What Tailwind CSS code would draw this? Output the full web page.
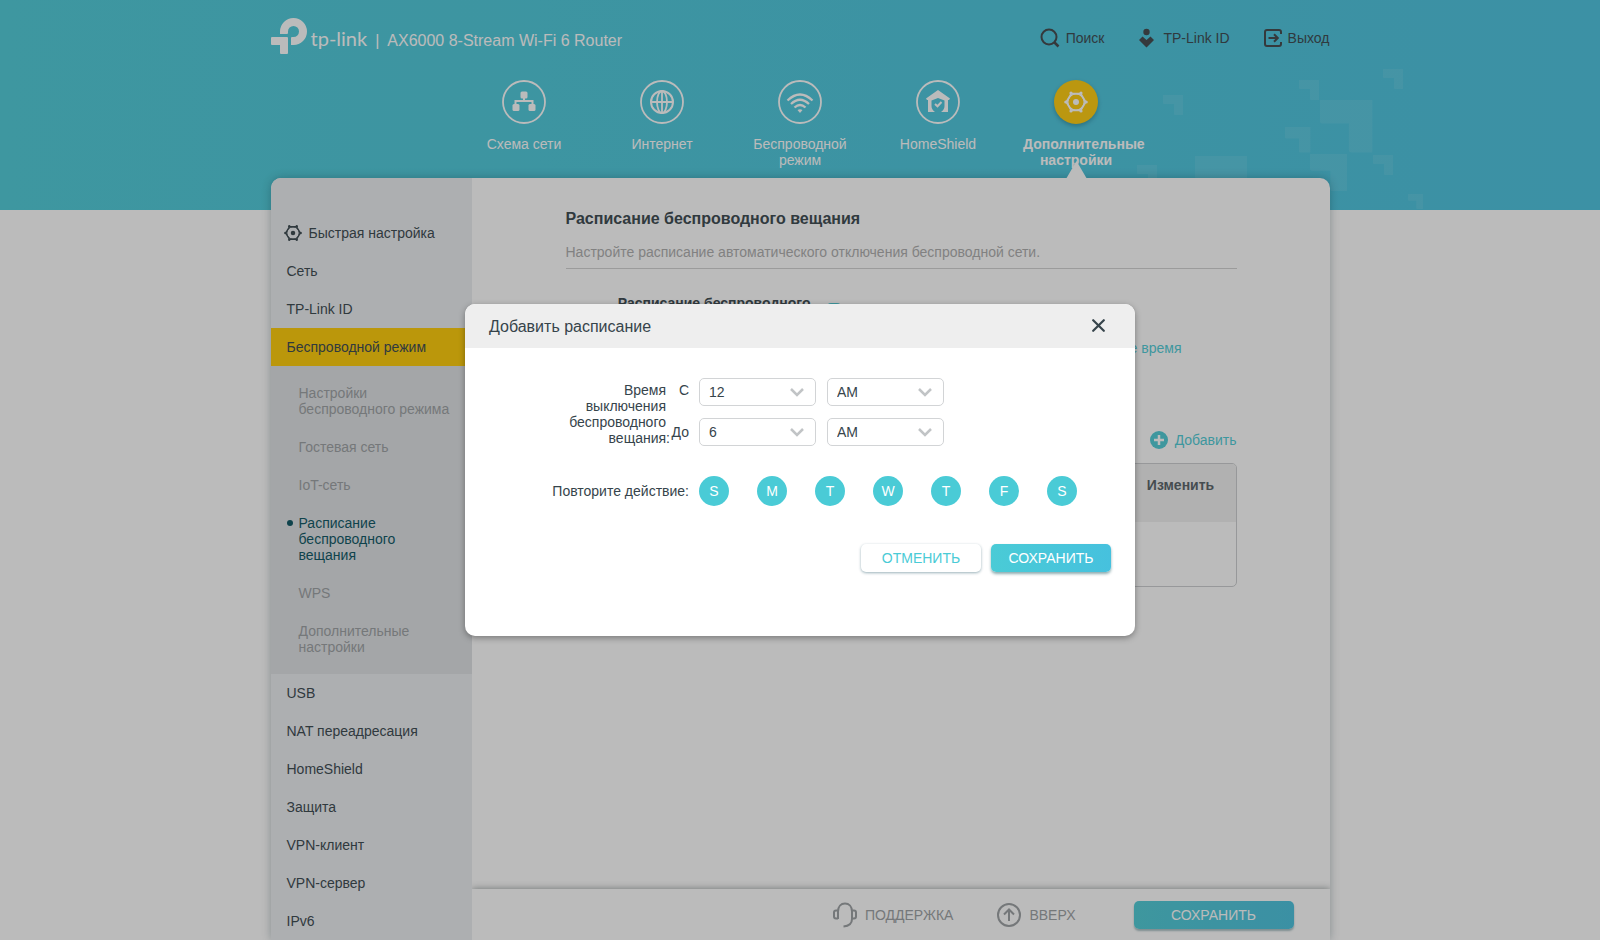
<!DOCTYPE html>
<html lang="ru">
<head>
  <meta charset="UTF-8" />
  <meta name="viewport" content="width=device-width, initial-scale=1" />
  <title>AX6000 8-Stream Wi-Fi 6 Router</title>
  <script src="https://cdn.jsdelivr.net/npm/@tailwindcss/browser@4"></script>
</head>
<body class="bg-white font-['Liberation_Sans',Arial,sans-serif] text-sm leading-4 text-[#36444b]">
  <div class="relative min-h-screen flex flex-col overflow-hidden">

    <!-- Header background -->
    <div class="absolute inset-x-0 top-0 h-[210px] overflow-hidden bg-linear-to-r from-[#4acbd8] to-[#47c2df]">
      <svg class="absolute left-1/2 top-0 ml-[337px]" width="290" height="210" viewBox="1137 0 290 210" fill="#fff" fill-opacity=".08" aria-hidden="true">
        <defs><path id="corner" d="M0 0H20V20H12Q11 20 11 19V9H1Q0 9 0 8Z" /></defs>
        <use href="#corner" transform="translate(1163 95)" />
        <use href="#corner" transform="translate(1299 80)" />
        <use href="#corner" transform="translate(1383 69)" />
        <use href="#corner" transform="translate(1373 155)" />
        <use href="#corner" transform="translate(1137 165)" />
        <use href="#corner" transform="translate(1408 194) scale(.75)" />
        <use href="#corner" transform="translate(1285 127) scale(1.27)" />
        <use href="#corner" transform="translate(1310 154) scale(1.85)" />
        <use href="#corner" transform="translate(1320 100) scale(2.62)" />
        <use href="#corner" transform="translate(1195 156) scale(2.6)" />
      </svg>
    </div>

    <div class="relative w-full max-w-[1059px] mx-auto flex-1 flex flex-col">
      <!-- Top bar -->
      <header class="h-20 flex justify-between">
        <div class="flex items-start pt-[18px] text-white">
          <svg width="36" height="36" viewBox="0 0 36 36" fill="currentColor" aria-hidden="true">
            <path d="M9 16V13.5A13.5 13.5 0 1 1 22.5 27H20V20Q20 19 21 19H22.5A5.5 5.5 0 1 0 17 13.5V15Q17 16 16 16Z" />
            <path d="M1 19H16Q17 19 17 20V35Q17 36 16 36H10Q9 36 9 35V27H1Q0 27 0 26V20Q0 19 1 19Z" />
          </svg>
          <span class="ml-1 pt-2 font-['Lato',sans-serif] text-xl leading-6">tp-link</span>
          <span class="pt-[13px] pl-2 text-base leading-5">|</span>
          <span class="pt-[13px] pl-2 text-base leading-5">AX6000 8-Stream Wi-Fi 6 Router</span>
        </div>
        <nav class="flex items-start gap-[34px] pt-7">
          <a href="#" class="flex items-center gap-1.5 h-5">
            <svg width="20" height="20" viewBox="0 0 20 20" fill="none" stroke="#3e4347" stroke-width="2" aria-hidden="true"><circle cx="9" cy="9" r="7.5" /><path d="M14.5 14.5L18.5 18.5" stroke-width="2.5" /></svg>
            Поиск
          </a>
          <a href="#" class="flex items-center gap-2 h-5">
            <svg width="17" height="20" viewBox="0 0 17 20" fill="#3e4347" aria-hidden="true"><circle cx="8.500" cy="4" r="3.2" /><path d="M1 12L4.500 8.500L8.500 12L12.500 8.500L16 12L8.500 19.500Z" /></svg>
            TP-Link ID
          </a>
          <a href="#" class="flex items-center gap-1.5 h-5">
            <svg width="18" height="20" viewBox="0 0 18 20" fill="none" stroke="#3e4347" stroke-width="2" aria-hidden="true"><path d="M17 6V4Q17 2 15 2H3Q1 2 1 4V16Q1 18 3 18H15Q17 18 17 16V14M4.500 10H13.500M10 6.200L13.800 10L10 13.800" /></svg>
            Выход
          </a>
        </nav>
      </header>

      <!-- Main tabs -->
      <nav class="h-[98px] flex justify-center text-white text-center">
        <a href="#" class="w-[138px] flex flex-col items-center gap-3">
          <svg width="44" height="44" viewBox="0 0 44 44" fill="none" stroke="currentColor" stroke-width="1.800" aria-hidden="true"><circle cx="22" cy="22" r="21" /><g fill="currentColor" stroke="none"><rect x="18.500" y="11.500" width="7" height="7" rx="1.500" /><rect x="10.500" y="24" width="7" height="7" rx="1.500" /><rect x="26.500" y="24" width="7" height="7" rx="1.500" /></g><path d="M22 18V21M13.500 25V21H30.500V25" stroke-width="2" /></svg>
          Схема сети
        </a>
        <a href="#" class="w-[138px] flex flex-col items-center gap-3">
          <svg width="44" height="44" viewBox="0 0 44 44" fill="none" stroke="currentColor" stroke-width="1.800" aria-hidden="true"><circle cx="22" cy="22" r="21" /><circle cx="22" cy="22" r="11" stroke-width="2" /><ellipse cx="22" cy="22" rx="5" ry="11" /><path d="M11 22H33M22 11V33" /></svg>
          Интернет
        </a>
        <a href="#" class="w-[138px] flex flex-col items-center gap-3">
          <svg width="44" height="44" viewBox="0 0 44 44" fill="none" stroke="currentColor" stroke-width="1.800" aria-hidden="true"><circle cx="22" cy="22" r="21" /><path d="M9.500 20.500Q22 8.500 34.500 20.500M13 24Q22 15.500 31 24M16.500 27.500Q22 22.500 27.500 27.500" stroke-width="2.300" /><path d="M19.500 30Q22 28.500 24.500 30L22 33Z" fill="currentColor" stroke="none" /></svg>
          <span class="px-5">Беспроводной режим</span>
        </a>
        <a href="#" class="w-[138px] flex flex-col items-center gap-3">
          <svg width="44" height="44" viewBox="0 0 44 44" fill="none" stroke="currentColor" stroke-width="1.800" aria-hidden="true"><circle cx="22" cy="22" r="21" /><path d="M22 10L34 18.500L33 20H32V32H25Q28.500 29.500 28.500 26V20.500L22 18L15.500 20.500V26Q15.500 29.500 19 32H12V20H11L10 18.500Z" fill="currentColor" stroke="none" /><path d="M19 24L21.500 26.300L25.500 22" stroke-width="2" /></svg>
          HomeShield
        </a>
        <a href="#" class="w-[138px] flex flex-col items-center gap-3 font-bold">
          <svg class="rounded-full bg-[#ffcb08] shadow-[0_2px_4px_rgba(0,60,80,0.35)]" width="44" height="44" viewBox="0 0 44 44" fill="none" stroke="currentColor" aria-hidden="true">
            <g id="gear"><path d="M17.300 13.700H26.700L31.700 22L26.700 30.300H17.300L12.300 22Z" stroke-width="1.800" /><circle cx="22" cy="22" r="8.200" stroke-width="1.300" /><g fill="currentColor" stroke="none"><circle cx="22" cy="22" r="3" /><circle cx="11.800" cy="22" r="1.600" /><circle cx="32.200" cy="22" r="1.600" /><circle cx="17" cy="13" r="1.600" /><circle cx="27" cy="13" r="1.600" /><circle cx="17" cy="31" r="1.600" /><circle cx="27" cy="31" r="1.600" /></g></g>
          </svg>
          <span class="relative w-[106px]">Дополнительные настройки
            <svg class="absolute left-1/2 -ml-[10px] top-6" width="21" height="19" viewBox="0 0 21 19" fill="#fff" aria-hidden="true"><path d="M10.500 1L21 19H0Z" /></svg>
          </span>
        </a>
      </nav>

      <!-- Card -->
      <div class="flex-1 flex rounded-t-[10px] bg-white shadow-[0_0_10px_rgba(0,40,50,0.3)]">
        <aside class="w-[201px] shrink-0 pt-9 rounded-tl-[10px] bg-[#ebeef1]">
          <a href="#" class="h-[38px] pl-[13px] flex items-center gap-[7px]">
            <svg width="18" height="18" viewBox="10 10 24 24" fill="none" stroke="currentColor" aria-hidden="true"><use href="#gear" /></svg>
            Быстрая настройка
          </a>
          <a href="#" class="h-[38px] pl-4 flex items-center">Сеть</a>
          <a href="#" class="h-[38px] pl-4 flex items-center">TP-Link ID</a>
          <a href="#" class="h-[38px] pl-4 flex items-center bg-[#ffcb00]">Беспроводной режим</a>
          <div class="py-2 pl-7 pr-5 bg-[#dee1e4] text-[#9a9ea1]">
            <a href="#" class="block py-[11px]">Настройки беспроводного режима</a>
            <a href="#" class="block py-[11px]">Гостевая сеть</a>
            <a href="#" class="block py-[11px]">IoT-сеть</a>
            <a href="#" class="relative block py-[11px] text-[#07525f]"><i class="absolute -left-3 top-4 size-1.5 rounded-full bg-current"></i>Расписание беспроводного вещания</a>
            <a href="#" class="block py-[11px]">WPS</a>
            <a href="#" class="block py-[11px]">Дополнительные настройки</a>
          </div>
          <a href="#" class="h-[38px] pl-4 flex items-center">USB</a>
          <a href="#" class="h-[38px] pl-4 flex items-center">NAT переадресация</a>
          <a href="#" class="h-[38px] pl-4 flex items-center">HomeShield</a>
          <a href="#" class="h-[38px] pl-4 flex items-center">Защита</a>
          <a href="#" class="h-[38px] pl-4 flex items-center">VPN-клиент</a>
          <a href="#" class="h-[38px] pl-4 flex items-center">VPN-сервер</a>
          <a href="#" class="h-[38px] pl-4 flex items-center">IPv6</a>
        </aside>

        <div class="flex-1 min-w-0 flex flex-col overflow-hidden rounded-tr-[10px]">
          <main class="flex-1 pl-[94px] pr-[93px] pt-[31px]">
            <h1 class="text-base leading-5 font-bold">Расписание беспроводного вещания</h1>
            <p class="mt-[15px] pb-2 border-b-1 border-[#d1d1d1] text-[#acacac]">Настройте расписание автоматического отключения беспроводной сети.</p>
            <div class="mt-[26px] h-8 flex gap-4 font-bold">
              <label for="schedule" class="w-[245px] pl-10 text-right">Расписание беспроводного</label>
              <input id="schedule" type="checkbox" checked class="mt-2 size-3.5 appearance-none rounded-sm bg-[#4acbd6]" />
            </div>
            <div class="mt-[13px] pr-[55px] text-right"><a href="#" class="text-[#4acbd6]">Системное время</a></div>
            <div class="mt-[75px] flex justify-end">
              <button class="flex items-center gap-[7px] text-[#4acbd6]">
                <svg width="18" height="18" viewBox="0 0 18 18" aria-hidden="true"><circle cx="9" cy="9" r="9" fill="#4acbd6" /><path d="M9 4V14M4 9H14" stroke="#fff" stroke-width="2.500" /></svg>
                Добавить
              </button>
            </div>
            <div class="mt-3.5 h-[124px] rounded-[5px] border border-[#cbcdcf] overflow-hidden">
              <table class="w-full">
                <thead class="bg-[#f1f1f1] text-[#555f65]">
                  <tr class="h-[58px] align-top">
                    <th></th>
                    <th class="w-[110px] pt-[13px]">Изменить</th>
                  </tr>
                </thead>
                <tbody><tr class="h-16"><td></td><td></td></tr></tbody>
              </table>
            </div>
          </main>

          <footer class="sticky bottom-0 h-[51px] pr-9 flex items-center justify-end bg-white text-[#9a9ea1] shadow-[0_0_7px_rgba(0,20,20,0.45)]">
            <a href="#" class="flex items-center gap-2">
              <svg width="24" height="26" viewBox="0 0 24 26" fill="none" stroke="currentColor" stroke-width="2" aria-hidden="true"><path d="M5 17V9.500C5 4.500 8 1.500 12 1.500S19 4.500 19 9.500V17C19 21.500 16 24 10.500 24.500M5 8.500H3Q1 8.500 1 10.500V14.500Q1 16.500 3 16.500H5M19 8.500H21Q23 8.500 23 10.500V14.500Q23 16.500 21 16.500H19" /></svg>
              ПОДДЕРЖКА
            </a>
            <a href="#" class="ml-11 flex items-center gap-2">
              <svg width="24" height="26" viewBox="0 0 24 26" fill="none" stroke="currentColor" stroke-width="2" aria-hidden="true"><circle cx="12" cy="13" r="11" /><path d="M12 19V8M7 12.500L12 7.500L17 12.500" /></svg>
              ВВЕРХ
            </a>
            <button class="ml-[58px] w-40 h-7 rounded-[5px] bg-linear-to-r from-[#4acbd6] to-[#46c1de] text-white shadow-[0_2px_2px_rgba(0,70,80,0.35)]">СОХРАНИТЬ</button>
          </footer>
        </div>
      </div>
    </div>

    <!-- Overlay and dialog -->
    <div class="absolute inset-0 pt-[304px] px-4 bg-[#232323]/31">
      <section role="dialog" aria-labelledby="dlg-title" class="max-w-[670px] mx-auto rounded-[10px] overflow-hidden bg-white shadow-[0_2px_6px_rgba(0,0,0,0.35)]">
        <div class="h-11 pl-6 pr-[30px] flex items-center justify-between bg-[#eee]">
          <h2 id="dlg-title" class="pt-0.5 text-base leading-5">Добавить расписание</h2>
          <button aria-label="Закрыть" class="pb-0.5"><svg width="13" height="13" viewBox="0 0 13 13" stroke="#36444b" stroke-width="2.200" stroke-linecap="round" aria-hidden="true"><path d="M1.200 1.200L11.800 11.800M11.800 1.200L1.200 11.800" /></svg></button>
        </div>
        <form class="pt-[30px] pb-16 pr-6">
          <div class="flex">
            <div class="w-[201px] pl-24 pt-1 text-right">Время выключения беспроводного вещания<span class="-mr-1">:</span></div>
            <div class="space-y-3">
              <div class="flex items-center gap-2.5">
                <label for="from" class="w-[23px] pt-1 self-start text-right">С</label>
                <div class="relative">
                  <select id="from" class="block w-[117px] h-7 pl-[9px] appearance-none rounded-[5px] border border-[#d2d4d6] bg-white"><option>12</option></select>
                  <svg class="absolute right-3 top-2.5 pointer-events-none" width="14" height="9" viewBox="0 0 14 9" fill="none" stroke="#c1c4c6" stroke-width="2.500" aria-hidden="true"><path d="M1 1L7 7L13 1" /></svg>
                </div>
                <div class="relative ml-px">
                  <select aria-label="AM/PM" class="block w-[117px] h-7 pl-[9px] appearance-none rounded-[5px] border border-[#d2d4d6] bg-white"><option>AM</option><option>PM</option></select>
                  <svg class="absolute right-3 top-2.5 pointer-events-none" width="14" height="9" viewBox="0 0 14 9" fill="none" stroke="#c1c4c6" stroke-width="2.500" aria-hidden="true"><path d="M1 1L7 7L13 1" /></svg>
                </div>
              </div>
              <div class="flex items-center gap-2.5">
                <label for="to" class="w-[23px] flex justify-end">До</label>
                <div class="relative">
                  <select id="to" class="block w-[117px] h-7 pl-[9px] appearance-none rounded-[5px] border border-[#d2d4d6] bg-white"><option>6</option></select>
                  <svg class="absolute right-3 top-2.5 pointer-events-none" width="14" height="9" viewBox="0 0 14 9" fill="none" stroke="#c1c4c6" stroke-width="2.500" aria-hidden="true"><path d="M1 1L7 7L13 1" /></svg>
                </div>
                <div class="relative ml-px">
                  <select aria-label="AM/PM" class="block w-[117px] h-7 pl-[9px] appearance-none rounded-[5px] border border-[#d2d4d6] bg-white"><option>AM</option><option>PM</option></select>
                  <svg class="absolute right-3 top-2.5 pointer-events-none" width="14" height="9" viewBox="0 0 14 9" fill="none" stroke="#c1c4c6" stroke-width="2.500" aria-hidden="true"><path d="M1 1L7 7L13 1" /></svg>
                </div>
              </div>
            </div>
          </div>

          <div class="mt-[30px] flex items-center gap-2.5">
            <div class="w-[224px] text-right">Повторите действие:</div>
            <div class="flex gap-7 text-white">
              <label class="relative size-[30px] flex items-center justify-center rounded-full bg-[#bfc2c4] has-checked:bg-[#4acbd6]"><input type="checkbox" checked class="sr-only" />S</label>
              <label class="relative size-[30px] flex items-center justify-center rounded-full bg-[#bfc2c4] has-checked:bg-[#4acbd6]"><input type="checkbox" checked class="sr-only" />M</label>
              <label class="relative size-[30px] flex items-center justify-center rounded-full bg-[#bfc2c4] has-checked:bg-[#4acbd6]"><input type="checkbox" checked class="sr-only" />T</label>
              <label class="relative size-[30px] flex items-center justify-center rounded-full bg-[#bfc2c4] has-checked:bg-[#4acbd6]"><input type="checkbox" checked class="sr-only" />W</label>
              <label class="relative size-[30px] flex items-center justify-center rounded-full bg-[#bfc2c4] has-checked:bg-[#4acbd6]"><input type="checkbox" checked class="sr-only" />T</label>
              <label class="relative size-[30px] flex items-center justify-center rounded-full bg-[#bfc2c4] has-checked:bg-[#4acbd6]"><input type="checkbox" checked class="sr-only" />F</label>
              <label class="relative size-[30px] flex items-center justify-center rounded-full bg-[#bfc2c4] has-checked:bg-[#4acbd6]"><input type="checkbox" checked class="sr-only" />S</label>
            </div>
          </div>

          <div class="mt-[38px] flex justify-end gap-2.5">
            <button type="button" class="w-[120px] h-7 rounded-[5px] bg-white text-[#4acbd6] shadow-[0_1px_3px_rgba(0,60,80,0.4)]">ОТМЕНИТЬ</button>
            <button type="button" class="w-[120px] h-7 rounded-[5px] bg-linear-to-r from-[#4acbd6] to-[#46c1de] text-white shadow-[0_2px_3px_rgba(0,70,80,0.45)]">СОХРАНИТЬ</button>
          </div>
        </form>
      </section>
    </div>
  </div>
</body>
</html>
